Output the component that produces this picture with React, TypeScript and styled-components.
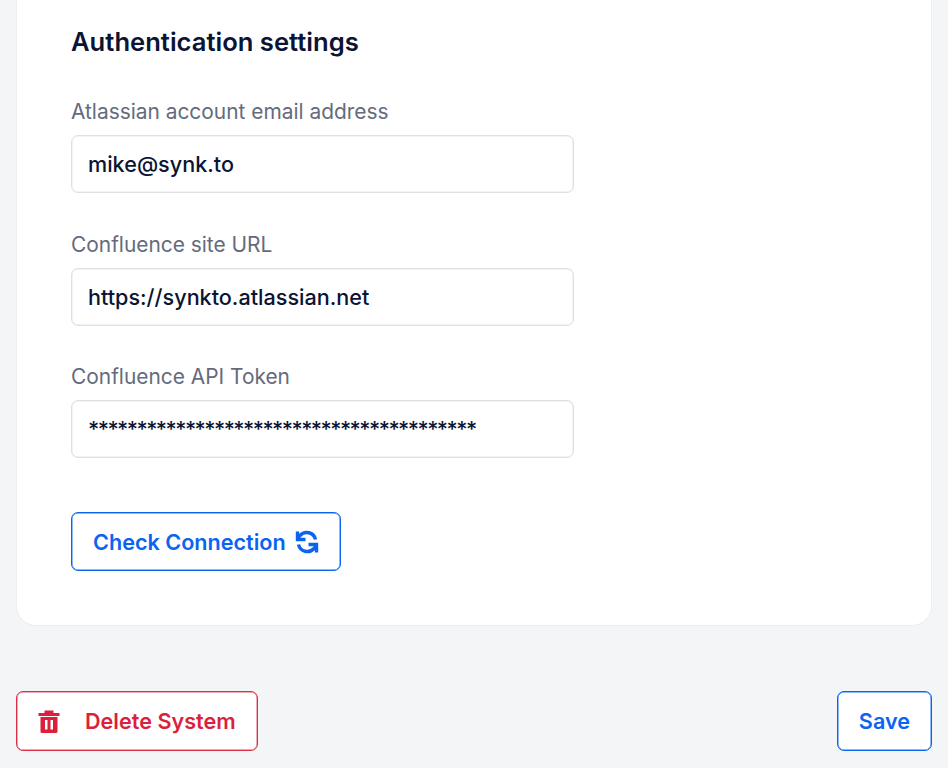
import React from "react";
import styled, { createGlobalStyle } from "styled-components";

const GlobalStyle = createGlobalStyle`
  html, body {
    margin: 0;
    padding: 0;
    background: #f4f5f7;
    font-family: Inter, "Liberation Sans", sans-serif;
  }
`;

const Page = styled.div`
  width: 948px;
  height: 768px;
  overflow: hidden;
  padding: 0 16px;
  box-sizing: border-box;
`;

const Panel = styled.section`
  height: 626px;
  box-sizing: border-box;
  padding: 26px 54px 0;
  background: #fff;
  border: 1px solid #eceef1;
  border-top: 0;
  border-radius: 0 0 20px 20px;
`;

const Title = styled.h2`
  margin: 0 0 40px;
  font-size: 25.6px;
  line-height: 32px;
  font-weight: 600;
  color: #0b1433;
`;

const Field = styled.div`
  margin-bottom: 37.5px;
`;

const Label = styled.label`
  display: block;
  margin-bottom: 9px;
  font-size: 20.9px;
  line-height: 28px;
  color: #646b7c;
`;

const Input = styled.div<{ $masked?: boolean }>`
  width: 503px;
  height: 58px;
  box-sizing: border-box;
  padding: 0 16px;
  display: flex;
  align-items: center;
  border: 1px solid #dfe0e4;
  box-shadow: inset 0 0 0 0.5px #e6e7ea;
  border-radius: 7px;
  font-size: 21.6px;
  font-weight: 500;
  color: #0b1433;
  letter-spacing: ${(p) => (p.$masked ? "-1.55px" : "0")};
`;

const Button = styled.button<{ $tone: "blue" | "red" }>`
  height: 60px;
  box-sizing: border-box;
  display: inline-flex;
  align-items: center;
  background: #fff;
  border: 1px solid ${(p) => (p.$tone === "red" ? "#dc2f48" : "#0a64f0")};
  box-shadow: inset 0 0 0 0.5px ${(p) => (p.$tone === "red" ? "#e0566a" : "#1f74f2")};
  border-radius: 7px;
  color: ${(p) => (p.$tone === "red" ? "#dc1f3c" : "#0a64f0")};
  font-family: inherit;
  font-size: 21.6px;
  font-weight: 600;
  padding: 0 21px;
`;

const CheckButton = styled(Button)`
  margin-top: 16.5px;
  height: 59px;
  gap: 9px;
`;

const DeleteButton = styled(Button)`
  gap: 25px;
`;

const Footer = styled.div`
  margin-top: 65px;
  display: flex;
  justify-content: space-between;
`;

const RefreshIcon = () => (
  <svg width="24" height="24" viewBox="0 0 24 24" fill="none" stroke="currentColor" strokeWidth="3.4">
    <path d="M20.500 9.500A9 9 0 0 0 5 5.500L2.500 8" />
    <path d="M2.500 1.500V9.500h8" />
    <path d="M3.500 14.500A9 9 0 0 0 19 18.500L21.500 16" />
    <path d="M21.500 22.500V14.500h-8" />
  </svg>
);

const TrashIcon = () => (
  <svg width="22" height="23" viewBox="0 0 22 23" fill="currentColor">
    <path d="M0.500 3h6V0.500h9V3h6v3H0.500z" />
    <path
      fillRule="evenodd"
      d="M2.500 7h17v14.500a1.500 1.500 0 0 1-1.500 1.500H4a1.500 1.500 0 0 1-1.500-1.500zM7 10v9.500h2.500V10zm5.500 0v9.500H15V10z"
    />
  </svg>
);

export default function App() {
  return (
    <Page>
      <GlobalStyle />
      <Panel>
        <Title>Authentication settings</Title>
        <Field>
          <Label>Atlassian account email address</Label>
          <Input>mike@synk.to</Input>
        </Field>
        <Field>
          <Label>Confluence site URL</Label>
          <Input>https://synkto.atlassian.net</Input>
        </Field>
        <Field>
          <Label>Confluence API Token</Label>
          <Input $masked>****************************************</Input>
        </Field>
        <CheckButton $tone="blue">
          Check Connection
          <RefreshIcon />
        </CheckButton>
      </Panel>
      <Footer>
        <DeleteButton $tone="red">
          <TrashIcon />
          Delete System
        </DeleteButton>
        <Button $tone="blue">Save</Button>
      </Footer>
    </Page>
  );
}
